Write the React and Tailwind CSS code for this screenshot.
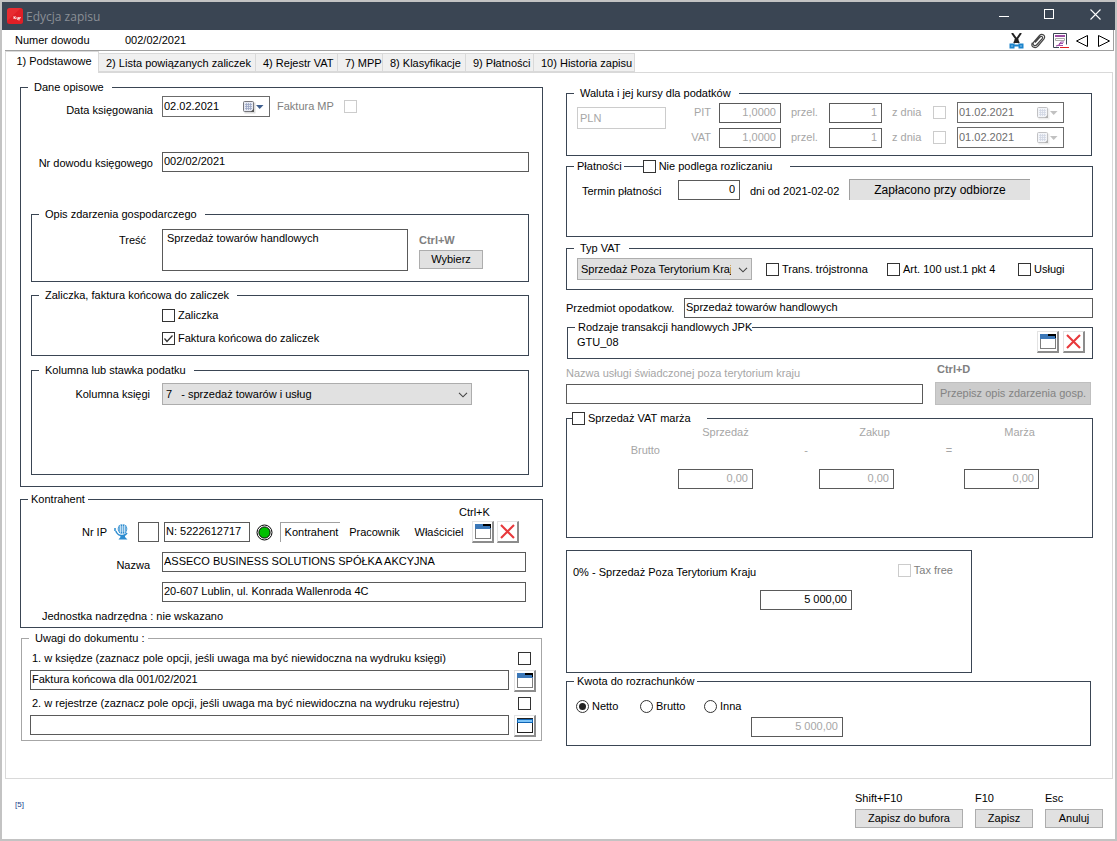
import React from "react";

const BOX = "h-5 border border-[#5a5a5a] bg-white pb-0.5 pl-px pr-1 text-[11px] leading-4 outline-none min-w-0";

function Group({ title, className = "", inner = "", line = "border-[#3a4553]", legend = "ml-[7px] pl-1.5 pr-2", children }) {
  return (
    <fieldset className={"min-w-0 border " + line + " " + className}>
      {title && (
        <legend className={"flex h-[13px] items-center whitespace-nowrap leading-[13px] " + legend}>{title}</legend>
      )}
      <div className={inner}>{children}</div>
    </fieldset>
  );
}

function Check({ label, id, disabled, defaultChecked, className = "" }) {
  return (
    <label className={"flex items-center gap-[3px] whitespace-nowrap " + (disabled ? "text-[#808080] " : "") + className}>
      <span className="grid size-[13px] shrink-0">
        <input
          id={id}
          type="checkbox"
          disabled={disabled}
          defaultChecked={defaultChecked}
          aria-label={label ? undefined : "Opcja"}
          className="peer col-start-1 row-start-1 size-[13px] appearance-none border border-[#333333] bg-white disabled:border-[#cccccc]"
        />
        <svg viewBox="0 0 13 13" className="pointer-events-none invisible col-start-1 row-start-1 size-[13px] peer-checked:visible">
          <path d="M2.5 6.5 5 9.5 10.5 3.5" fill="none" stroke="#333" strokeWidth="1.3" />
        </svg>
      </span>
      {label}
    </label>
  );
}

function Radio({ label, defaultChecked }) {
  return (
    <label className="flex w-16 items-center gap-[3px]">
      <span className="grid size-[13px] shrink-0 place-items-center">
        <input
          type="radio"
          name="kwota"
          defaultChecked={defaultChecked}
          className="peer col-start-1 row-start-1 size-[13px] appearance-none rounded-full border border-[#333333] bg-white"
        />
        <span className="pointer-events-none invisible col-start-1 row-start-1 size-[7px] rounded-full bg-[#222222] peer-checked:visible" />
      </span>
      {label}
    </label>
  );
}

function DateBox({ id, value, disabled, label, width }) {
  return (
    <div className={"flex h-[21px] items-center border border-[#6b6b6b] bg-white " + width + (disabled ? " text-[#6d6d6d]" : "")}>
      <input id={id} aria-label={label} defaultValue={value} disabled={disabled} className="w-0 grow pb-px pl-px text-[11px] leading-4 outline-none" />
      <button type="button" disabled={disabled} aria-label="Kalendarz" className="flex items-center pr-[5px] disabled:opacity-45">
        <svg width="21" height="14" viewBox="0 0 21 14">
          <rect x="1.5" y="2.5" width="11" height="11" fill="#b8b8b8" opacity=".5" />
          <rect x=".5" y="1.5" width="10" height="10" rx="1" fill="#e6e9f2" stroke="#77777c" />
          <path d="M2 4.5h7M2 6.5h7M2 8.5h7M3.5 3v7M5.5 3v7M7.5 3v7" stroke="#9aa6c4" strokeWidth=".8" />
          <path d="M7.500 12 11 8.500V12z" fill="#555" />
          <path d="M13 5h7.500L16.700 9z" fill={disabled ? "#777" : "#3f5f8f"} />
        </svg>
      </button>
    </div>
  );
}

function Drop({ id, value, label, className }) {
  return (
    <div className={"relative " + className}>
      <select id={id} aria-label={label} className="block h-[22px] w-full appearance-none border border-[#adadad] bg-[#e1e1e1] pl-[3px] pr-5 text-[11px] leading-4 outline-none">
        <option>{value}</option>
      </select>
      <svg width="10" height="6" viewBox="0 0 10 6" className="pointer-events-none absolute right-1 top-[9px]">
        <path d="M1 .8 5 4.800 9 .8" fill="none" stroke="#444" strokeWidth="1.1" />
      </svg>
    </div>
  );
}

function IconButton({ label, kind }) {
  return (
    <button
      type="button"
      aria-label={label}
      className="flex size-[22px] shrink-0 items-center justify-center border border-b-2 border-r-2 border-[#e3e3e3] border-b-[#8c8c8c] border-r-[#8c8c8c] bg-white"
    >
      {kind === "window" && (
        <svg width="17" height="17" viewBox="0 0 17 17">
          <rect x="1.5" y="1.500" width="15" height="14" fill="#fff" stroke="#7d7d7d" />
          <path d="M1 1h16v5H1z" fill="#3c78b8" />
          <path d="M9 1h8v4h-1V3H9z" fill="#000" />
        </svg>
      )}
      {kind === "list" && (
        <svg width="17" height="17" viewBox="0 0 17 17">
          <rect x="1.5" y="1.500" width="15" height="14" fill="#fff" stroke="#222" />
          <path d="M1 2h16v4H1z" fill="#1064b4" />
          <path d="M2 3h14v2H2z" fill="#7cc4f8" />
        </svg>
      )}
      {kind === "delete" && (
        <svg width="17" height="17" viewBox="0 0 17 17">
          <path d="M2 2 15 15M15 2 2 15" stroke="#e8393c" strokeWidth="2.100" />
        </svg>
      )}
    </button>
  );
}

function PushButton({ children, className = "", disabled }) {
  return (
    <button
      type="button"
      disabled={disabled}
      className={"whitespace-nowrap border border-[#adadad] bg-[#e1e1e1] disabled:border-[#bfbfbf] disabled:bg-[#cccccc] disabled:text-[#838383] " + className}
    >
      {children}
    </button>
  );
}

function TitleBar() {
  return (
    <header className="flex h-7 items-center bg-[#3a4553] pl-[5px]">
      <svg width="16" height="16" viewBox="0 0 16 16">
        <rect width="16" height="16" rx="2.500" fill="#e01f26" />
        <path d="M2 0h12L0 13V2z" fill="#f03a3c" opacity=".5" />
        <path d="M7 8v3M7 10l2-1.500M7 9.500 9 11M10 9v2l1 .5 1-2.500v3.500M13.500 9l-1 2" stroke="#fff" strokeWidth=".8" fill="none" />
      </svg>
      <h1 className="ml-[3px] grow pt-0.5 font-['Open_Sans','Noto_Sans',sans-serif] text-xs text-[#8a8f96]">Edycja zapisu</h1>
      <button type="button" aria-label="Minimalizuj" className="flex h-7 w-[38px] items-center justify-center">
        <svg width="10" height="10"><path d="M0 5.500h10" stroke="#fff" /></svg>
      </button>
      <button type="button" aria-label="Maksymalizuj" className="flex h-7 w-[52px] items-center justify-center pb-1">
        <svg width="10" height="10"><rect x=".5" y=".5" width="9" height="9" fill="none" stroke="#fff" /></svg>
      </button>
      <button type="button" aria-label="Zamknij" className="flex h-7 w-10 items-center justify-center pb-1">
        <svg width="11" height="11"><path d="M.5.5l10 10M10.500.5l-10 10" stroke="#fff" strokeWidth="1.100" /></svg>
      </button>
    </header>
  );
}

function Toolbar() {
  return (
    <div className="ml-[3px] mr-px flex h-[21px] items-center border-b border-r border-[#a0a0a0] pl-2.5 pr-[3px]">
      <span className="w-[110px]">Numer dowodu</span>
      <span className="grow">002/02/2021</span>
      <div className="flex items-center gap-[7px] pt-0.5">
        <button type="button" aria-label="Wytnij">
          <svg width="15" height="16" viewBox="0 0 15 16" className="block">
            <path d="M3 0 10 10M12 0 5 10" stroke="#222" strokeWidth="2" />
            <path d="M5.500 6h4v4h-4z" fill="#222" />
            <path d="M1.500 11.500h3v3h-3zM10.500 11.500h3v3h-3z" fill="#fff" stroke="#1c84cc" strokeWidth="2" />
            <path d="M5 11.500h5v2H5z" fill="#1c84cc" />
          </svg>
        </button>
        <button type="button" aria-label="Załącznik">
          <svg width="15" height="16" viewBox="0 0 15 16" className="block">
            <path d="M4 9.500 9 4c1.500-1.500 3.500 0 2.200 1.600L6 11.500c-2 2.300-5.300.2-3.300-2.300L8.500 2.500c2.500-2.700 7 .2 4.300 3.700L7 13c-2.800 3.500-8 .5-5.500-3.300" fill="none" stroke="#444" strokeWidth="1.200" />
          </svg>
        </button>
        <button type="button" aria-label="Raport">
          <svg width="16" height="16" viewBox="0 0 16 16" className="block">
            <path d="M6 14.500H.5V.5h13v11" fill="#fff" stroke="#3a4553" />
            <path d="M2 2h10v2H2z" fill="#9c4ca4" />
            <path d="M2.500 5.500h9v2h-9z" fill="#fff" stroke="#aaa" />
            <path d="M3 13l3-1 2-3h3M6 10.500h4M4 12.500h6" stroke="#a050a8" fill="none" strokeWidth="1.200" />
            <path d="M7 14.500h9" stroke="#e02020" />
          </svg>
        </button>
        <button type="button" aria-label="Poprzedni">
          <svg width="12" height="12" viewBox="0 0 12 12" className="block"><path d="M11.500.5v11L.5 6z" fill="#fff" stroke="#000" /></svg>
        </button>
        <button type="button" aria-label="Następny" className="ml-[3px]">
          <svg width="12" height="12" viewBox="0 0 12 12" className="block"><path d="M.5.5v11l11-5.500z" fill="#fff" stroke="#000" /></svg>
        </button>
      </div>
    </div>
  );
}

const TABS = [
  ["2) Lista powiązanych zaliczek", "w-[157px]"],
  ["4) Rejestr VAT", "w-[82px]"],
  ["7) MPP", "w-[45px]"],
  ["8) Klasyfikacje", "w-[83px]"],
  ["9) Płatności", "w-[68px]"],
  ["10) Historia zapisu", "w-[101px]"],
];

function Tabs() {
  return (
    <nav role="tablist" className="ml-[3px] flex h-[22px] items-start">
      <button type="button" role="tab" aria-selected="true" className="relative z-10 h-[22px] w-[94px] whitespace-nowrap border-x border-t border-[#d9d9d9] bg-white pb-[3px] pl-1 text-center">
        1) Podstawowe
      </button>
      {TABS.map(([t, w]) => (
        <button key={t} type="button" role="tab" aria-selected="false" className={"mt-0.5 h-[19px] whitespace-nowrap border-b border-r border-t border-[#d9d9d9] bg-[#f0f0f0] pl-[7px] pt-px text-left " + w}>
          {t}
        </button>
      ))}
    </nav>
  );
}

function DescriptiveData() {
  return (
    <Group title="Dane opisowe" className="min-h-[406px]" inner="pl-2.5 pr-[13px]">
      <div className="mt-px flex items-center">
        <label htmlFor="data" className="w-[122px] pt-2 text-right">Data księgowania</label>
        <div className="ml-[9px]"><DateBox id="data" value="02.02.2021" width="w-[108px]" /></div>
        <label htmlFor="mp" className="ml-[7px] w-[67px] text-[#808080]">Faktura MP</label>
        <Check id="mp" disabled />
      </div>
      <div className="mt-[34px] flex items-center">
        <label htmlFor="nr" className="w-[122px] pt-0.5 text-right">Nr dowodu księgowego</label>
        <input id="nr" defaultValue="002/02/2021" className={BOX + " ml-[9px] grow"} />
      </div>
      <Group title="Opis zdarzenia gospodarczego" className="mt-9 min-h-[74px]">
        <div className="mt-2 flex">
          <label htmlFor="tresc" className="w-[114px] pt-1 text-right">Treść</label>
          <textarea id="tresc" defaultValue="Sprzedaż towarów handlowych" className="ml-4 h-[42px] w-[246px] resize-none border border-[#5a5a5a] px-1 pt-px text-[11px] leading-[15px] outline-none" />
          <div className="ml-[11px] w-16">
            <div className="pt-1 font-bold text-[#808080]">Ctrl+W</div>
            <PushButton className="mt-0.5 h-[19px] w-16">Wybierz</PushButton>
          </div>
        </div>
      </Group>
      <Group title="Zaliczka, faktura końcowa do zaliczek" className="mt-[7px] min-h-[67px]" inner="pl-[130px]">
        <Check label="Zaliczka" className="mt-1.5" />
        <Check label="Faktura końcowa do zaliczek" defaultChecked className="mt-2" />
      </Group>
      <Group title="Kolumna lub stawka podatku" className="mt-2 min-h-[111px]">
        <div className="mt-1.5 flex items-center">
          <label htmlFor="kol" className="w-[118px] text-right">Kolumna księgi</label>
          <Drop id="kol" value={"7\u00a0\u00a0 - sprzedaż towarów i usług"} className="ml-3 w-[310px]" />
        </div>
      </Group>
    </Group>
  );
}

function Contractor() {
  return (
    <Group title="Kontrahent" legend="ml-[7px] px-[3px]" className="mt-1.5 min-h-[135px]">
      <div className="-mt-px pl-[438px]">Ctrl+K</div>
      <div className="mt-px flex items-center">
        <label htmlFor="ip" className="w-[86px] text-right">Nr IP</label>
        <svg width="15" height="16" viewBox="0 0 15 16" className="ml-[7px]">
          <circle cx="8.500" cy="5" r="4.800" fill="#2c8cd0" />
          <path d="M4.500 3h8M4 5h9M4.500 7h8M6.500 1v8M8.500 0v10M10.500 1v8" stroke="#fff" strokeWidth=".6" />
          <path d="M1 4v3M1.800 7c1 3 4 5 7 4.500 2-.3 3.300-1 4.200-2.500" fill="none" stroke="#2c8cd0" strokeWidth="1.500" />
          <path d="M6 11h5v2l2.500 2.500h-9L6.500 13z" fill="#2c8cd0" />
        </svg>
        <input id="ip" className={BOX + " ml-[9px] w-[21px]"} />
        <input aria-label="NIP" defaultValue="N: 5222612717" className={BOX + " ml-[5px] w-[86px]"} />
        <svg width="17" height="17" viewBox="0 0 17 17" className="ml-1.5">
          <circle cx="8.500" cy="8.500" r="7.500" fill="#fff" stroke="#000" />
          <circle cx="8.500" cy="8.500" r="5.600" fill="#00c000" stroke="#000" />
        </svg>
        <button type="button" className="ml-[7px] h-5 w-[60px] border-l border-t border-[#a0a0a0] pl-0.5 text-center">Kontrahent</button>
        <button type="button" className="ml-[7px] w-[55px] text-center">Pracownik</button>
        <button type="button" className="ml-3 mr-2 w-[50px] text-center">Właściciel</button>
        <IconButton label="Wybierz kontrahenta" kind="window" />
        <span className="w-[3px]" />
        <IconButton label="Usuń kontrahenta" kind="delete" />
      </div>
      <div className="mt-[7px] flex items-center pr-4">
        <label htmlFor="nazwa" className="w-[129px] pt-2 text-right">Nazwa</label>
        <input id="nazwa" defaultValue="ASSECO BUSINESS SOLUTIONS SPÓŁKA AKCYJNA" className={BOX + " ml-3 grow"} />
      </div>
      <div className="mt-[9px] flex pl-[141px] pr-4">
        <input aria-label="Adres" defaultValue="20-607 Lublin, ul. Konrada Wallenroda 4C" className={BOX + " grow"} />
      </div>
      <div className="mt-[7px] pl-[21px]">Jednostka nadrzędna : nie wskazano</div>
    </Group>
  );
}

function Note({ id, label, value, kind }) {
  return (
    <div className="grid grid-cols-[1fr_22px] gap-x-[5px] gap-y-1 pl-2 pr-[5px]">
      <label htmlFor={id} className="pl-0.5 leading-[15px]">{label}</label>
      <Check className="pl-1" />
      <input id={id} defaultValue={value} className={BOX} />
      <IconButton label="Wybierz uwagę" kind={kind} />
    </div>
  );
}

function Notes() {
  return (
    <Group title="Uwagi do dokumentu :" legend="ml-[7px] pl-1.5 pr-1" line="border-[#a6a6a6]" className="ml-px mr-px mt-1 min-h-[109px]">
      <div className="mt-1.5">
        <Note id="u1" label="1. w księdze (zaznacz pole opcji, jeśli uwaga ma być niewidoczna na wydruku księgi)" value="Faktura końcowa dla 001/02/2021" kind="window" />
      </div>
      <div className="mt-1">
        <Note id="u2" label="2. w rejestrze (zaznacz pole opcji, jeśli uwaga ma być niewidoczna na wydruku rejestru)" kind="list" />
      </div>
    </Group>
  );
}

function RateRow({ name }) {
  return (
    <div className="flex items-center text-[#a6a6a6]">
      <label htmlFor={name} className="w-[31px] text-right">{name}</label>
      <input id={name} disabled defaultValue="1,0000" className={BOX + " ml-2 w-[62px] text-right"} />
      <label htmlFor={name + "p"} className="ml-2.5 w-7">przel.</label>
      <input id={name + "p"} disabled defaultValue="1" className={BOX + " ml-2.5 w-[53px] text-right"} />
      <label htmlFor={name + "d"} className="ml-2.5 w-[41px]">z dnia</label>
      <Check id={name + "d"} disabled />
      <div className="ml-[11px]"><DateBox value="01.02.2021" disabled label={"Data kursu " + name} width="w-[107px]" /></div>
    </div>
  );
}

function Currency() {
  return (
    <Group title="Waluta i jej kursy dla podatków" className="mr-px min-h-[69px]">
      <div className="flex items-start">
        <input aria-label="Waluta" disabled defaultValue="PLN" className="ml-2.5 mt-[7px] h-[22px] w-[89px] border border-[#cccccc] px-0.5 pb-px text-[11px] text-[#a6a6a6]" />
        <div className="ml-3.5 mt-0.5 flex flex-col gap-1">
          <RateRow name="PIT" />
          <RateRow name="VAT" />
        </div>
      </div>
    </Group>
  );
}

function Payments() {
  return (
    <Group
      title={
        <>
          <span className="pr-0.5">Płatności</span>
          <span className="h-px w-[19px] bg-[#3a4553]" />
          <Check label="Nie podlega rozliczaniu" className="pr-[18px]" />
        </>
      }
      legend="ml-[7px] pl-[3px]"
      className="mt-1 min-h-[77px]"
    >
      <div className="mt-1.5 flex items-center pl-[15px]">
        <label htmlFor="termin" className="w-24 pt-1">Termin płatności</label>
        <input id="termin" defaultValue="0" className={BOX + " w-[62px] text-right"} />
        <span className="ml-2.5 w-[99px] whitespace-nowrap pt-1">dni od 2021-02-02</span>
        <button type="button" className="h-[21px] w-[181px] border-l border-t border-[#a0a0a0] bg-[#e1e1e1] text-xs">Zapłacono przy odbiorze</button>
      </div>
    </Group>
  );
}

function VatType() {
  return (
    <>
      <Group title="Typ VAT" className="mt-[5px] min-h-12">
        <div className="mt-[3px] flex items-center pl-2.5">
          <Drop label="Typ VAT" value="Sprzedaż Poza Terytorium Kraju" className="w-[175px]" />
          <Check label="Trans. trójstronna" className="ml-3.5 w-[121px]" />
          <Check label="Art. 100 ust.1 pkt 4" className="w-[131px]" />
          <Check label="Usługi" />
        </div>
      </Group>
      <div className="mt-2 flex items-center">
        <label htmlFor="przedmiot" className="w-[118px]">Przedmiot opodatkow.</label>
        <input id="przedmiot" defaultValue="Sprzedaż towarów handlowych" className={BOX + " grow"} />
      </div>
      <Group title="Rodzaje transakcji handlowych JPK" legend="ml-[7px] pl-[3px]" className="ml-px mt-[3px] min-h-[38px]">
        <div className="-mt-[3px] flex items-start gap-1 pl-[9px] pr-[7px]">
          <span className="grow pt-1">GTU_08</span>
          <IconButton label="Wybierz rodzaj" kind="window" />
          <IconButton label="Usuń rodzaj" kind="delete" />
        </div>
      </Group>
      <div className="mt-0.5 grid grid-cols-[1fr_156px] items-center gap-x-3 pr-0.5">
        <label htmlFor="usluga" className="pb-px pt-[5px] text-[#a6a6a6]">Nazwa usługi świadczonej poza terytorium kraju</label>
        <span className="pb-1 pl-0.5 font-bold text-[#808080]">Ctrl+D</span>
        <input id="usluga" className={BOX} />
        <PushButton disabled className="h-[23px]">Przepisz opis zdarzenia gosp.</PushButton>
      </div>
    </>
  );
}

function Margin() {
  const amount = BOX + " mt-[11px] w-[75px] text-right";
  return (
    <Group title={<Check label="Sprzedaż VAT marża" />} legend="ml-[5px] pr-4" className="mt-[7px] min-h-[126px]">
      <div className="grid grid-cols-[111px_75px_66px_75px_70px_75px] items-center justify-items-center text-[#a6a6a6]">
        <span />
        <label htmlFor="m1" className="pl-5">Sprzedaż</label>
        <span />
        <label htmlFor="m2" className="pl-9">Zakup</label>
        <span />
        <label htmlFor="m3" className="pl-9">Marża</label>
        <span className="mt-[3px] justify-self-end pr-[18px]">Brutto</span>
        <span />
        <span className="mt-[3px] pl-10">-</span>
        <span />
        <span className="mt-[3px] pl-10">=</span>
        <span />
        <span />
        <input id="m1" disabled defaultValue="0,00" className={amount} />
        <span />
        <input id="m2" disabled defaultValue="0,00" className={amount} />
        <span />
        <input id="m3" disabled defaultValue="0,00" className={amount} />
      </div>
    </Group>
  );
}

function Summary() {
  return (
    <>
      <Group className="mr-[121px] mt-3 min-h-[123px]" inner="pl-1.5 pr-[18px] pt-2.5">
        <div className="flex items-center justify-between">
          <label htmlFor="kwota0" className="pt-1">0% - Sprzedaż Poza Terytorium Kraju</label>
          <Check label="Tax free" disabled />
        </div>
        <input id="kwota0" defaultValue="5 000,00" className={BOX + " ml-[187px] mt-2.5 block w-[92px] text-right"} />
      </Group>
      <Group title="Kwota do rozrachunków" legend="ml-[7px] px-[3px]" className="mr-0.5 mt-0.5 min-h-[71px]">
        <div className="mt-[11px] flex pl-[9px]">
          <Radio label="Netto" defaultChecked />
          <Radio label="Brutto" />
          <Radio label="Inna" />
        </div>
        <input aria-label="Kwota do rozrachunków" disabled defaultValue="5 000,00" className={BOX + " ml-[184px] mt-[3px] block w-[92px] text-right text-[#a6a6a6]"} />
      </Group>
    </>
  );
}

const ACTIONS = [
  ["Shift+F10", "Zapisz do bufora", "w-[108px]"],
  ["F10", "Zapisz", "w-[58px]"],
  ["Esc", "Anuluj", "w-[58px]"],
];

export default function App() {
  return (
    <div className="flex min-h-screen flex-col border-2 border-[#c3c3c3] bg-white font-['Liberation_Sans',Arial,sans-serif] text-[11px] leading-[15px] text-black">
      <TitleBar />
      <Toolbar />
      <Tabs />
      <main className="-mt-px ml-[3px] mr-0.5 flex grow items-start gap-[23px] border border-[#d9d9d9] pl-3.5 pr-[19px]">
        <div className="min-w-0 flex-[523] pt-2">
          <DescriptiveData />
          <Contractor />
          <Notes />
        </div>
        <div className="min-w-0 flex-[527] pt-3.5">
          <Currency />
          <Payments />
          <VatType />
          <Margin />
          <Summary />
        </div>
      </main>
      <footer className="flex items-end pb-[11px] pl-[13px] pr-3 pt-3">
        <span className="grow pb-4 text-[8px] text-[#1a3f8c]">[5]</span>
        <div className="flex gap-3">
          {ACTIONS.map(([key, name, w]) => (
            <div key={name}>
              <div>{key}</div>
              <PushButton className={"mt-[3px] h-[19px] " + w}>{name}</PushButton>
            </div>
          ))}
        </div>
      </footer>
    </div>
  );
}
